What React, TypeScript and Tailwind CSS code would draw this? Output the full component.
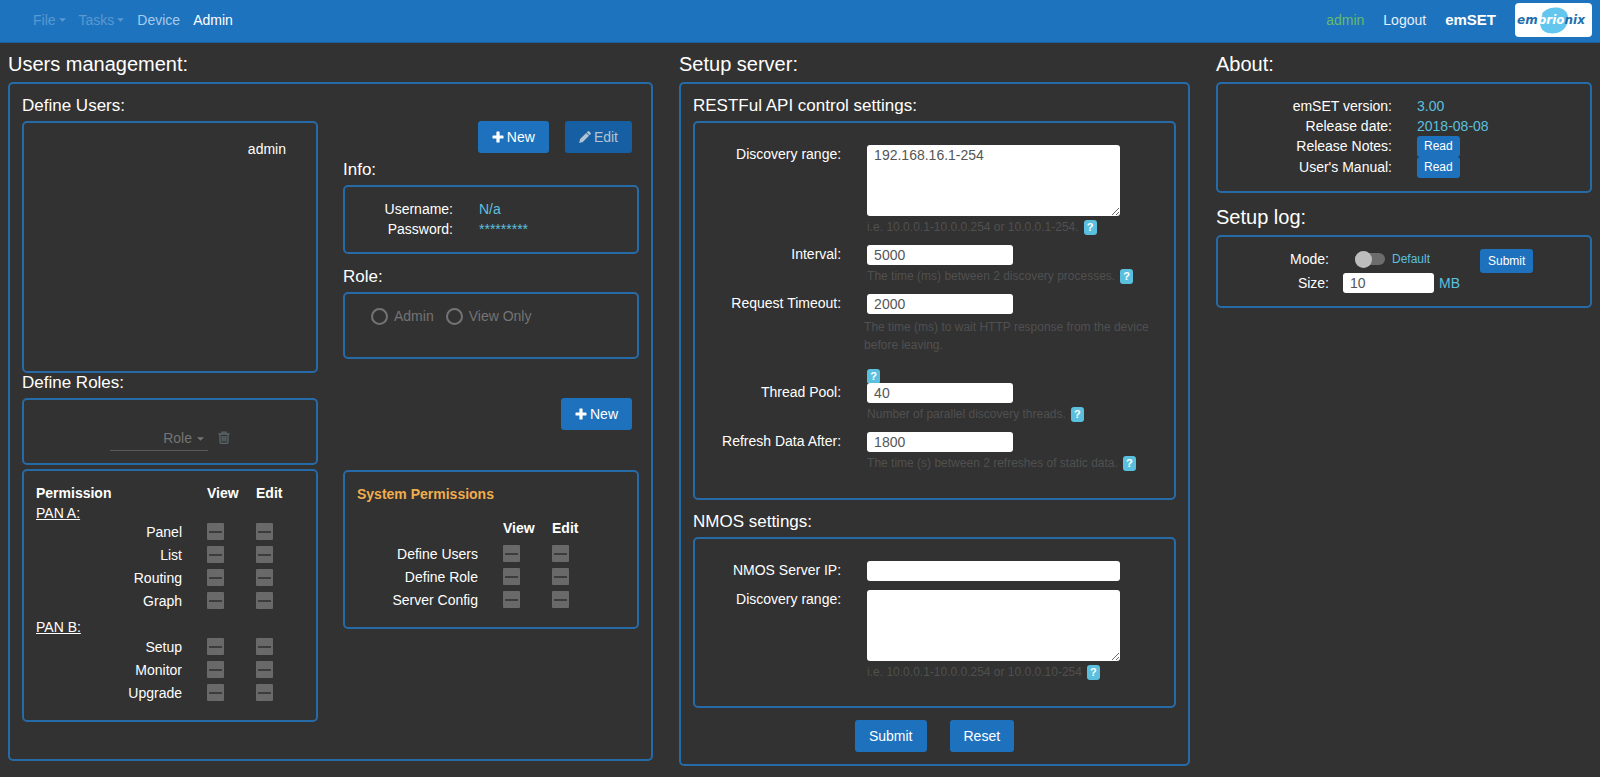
import { useId, type ReactNode } from "react";

function Panel({ className = "", children }: { className?: string; children?: ReactNode }) {
  return <div className={`rounded-[5px] border-2 border-[#266ba8] ${className}`}>{children}</div>;
}

function SectionTitle({ children }: { children: ReactNode }) {
  return <h1 className="mb-[6px] text-[20px] leading-6">{children}</h1>;
}

function PanelTitle({ children }: { children: ReactNode }) {
  return <h2 className="mb-[6px] text-[17px] leading-[19px]">{children}</h2>;
}

function Caret({ className = "" }: { className?: string }) {
  return (
    <svg viewBox="0 0 8 4" className={`h-1 w-[7px] ${className}`} fill="currentColor" aria-hidden="true">
      <path d="M0 0h8L4 4z" />
    </svg>
  );
}

function PlusIcon() {
  return (
    <svg viewBox="0 0 12 12" className="h-3 w-3" fill="currentColor" aria-hidden="true">
      <path d="M5 .5h2a.6.6 0 0 1 .6.6v3.3h3.3a.6.6 0 0 1 .6.6v2a.6.6 0 0 1-.6.6H7.6v3.3a.6.6 0 0 1-.6.6H5a.6.6 0 0 1-.6-.6V7.6H1.1A.6.6 0 0 1 .5 7V5a.6.6 0 0 1 .6-.6h3.3V1.1A.6.6 0 0 1 5 .5z" />
    </svg>
  );
}

function PencilIcon() {
  return (
    <svg viewBox="0 0 12 12" className="h-3 w-3" fill="currentColor" aria-hidden="true">
      <path d="M8.7.5a1.1 1.1 0 0 1 1.6 0l1.2 1.2a1.1 1.1 0 0 1 0 1.6l-1 1L7.700 1.500z" />
      <path d="M7.200 2l2.800 2.800-6.200 6.200L.1 12l1-3.900z" />
    </svg>
  );
}

function TrashIcon() {
  return (
    <svg viewBox="0 0 12 13" className="h-[13px] w-3" fill="none" stroke="currentColor" strokeWidth="1.3" aria-hidden="true">
      <path d="M.5 3h11M4 3V1.200h4V3M2 3v8.300a1 1 0 0 0 1 1h6a1 1 0 0 0 1-1V3M4.200 5v5.500M6 5v5.500M7.800 5v5.500" />
    </svg>
  );
}

function Button({ children, disabled }: { children: ReactNode; disabled?: boolean }) {
  return (
    <button
      type="button"
      disabled={disabled}
      className="flex h-8 items-center gap-[3px] rounded-[3px] bg-[#1e71bd] px-[14px] disabled:bg-[#165fa3] disabled:text-[#b4c3d0]"
    >
      {children}
    </button>
  );
}

function Help({ children }: { children: ReactNode }) {
  return (
    <div className="mb-[7px] flex h-[22px] items-center gap-[5px] text-[12px] text-[#505050]">
      <span>{children}</span>
      <HelpBadge />
    </div>
  );
}

function HelpBadge() {
  return (
    <button
      type="button"
      aria-label="Help"
      className="block h-[15px] w-[13px] rounded-[3px] bg-[#5bc0de] text-center text-[11px] leading-[15px] font-bold text-white"
    >
      ?
    </button>
  );
}

function Field({ label, value, wide, multiline, children }: {
  label: string;
  value: string;
  wide?: boolean;
  multiline?: boolean;
  children?: ReactNode;
}) {
  const id = useId();
  return (
    <div className="grid grid-cols-[30.5%_1fr] gap-x-[26px]">
      <label htmlFor={id} className="text-right leading-[18px]">{label}</label>
      <div>
        {multiline ? (
          <textarea id={id} defaultValue={value} className="block h-[71px] w-full max-w-[253px] rounded-[3px] bg-white px-[7px] leading-5 text-[#555]" />
        ) : (
          <input
            id={id}
            defaultValue={value}
            className={`block h-5 w-full rounded-[3px] bg-white px-[7px] text-[#555] ${wide ? "max-w-[253px]" : "max-w-[146px]"}`}
          />
        )}
        {children}
      </div>
    </div>
  );
}

function Tick({ label }: { label: string }) {
  return (
    <input
      type="checkbox"
      disabled
      aria-label={label}
      className="block h-[17px] w-[17px] appearance-none rounded-[1px] bg-[#696969] bg-[linear-gradient(#3c3c3c,#3c3c3c)] bg-[length:13px_2px] bg-center bg-no-repeat"
    />
  );
}

function PermissionRow({ name }: { name: string }) {
  return (
    <tr className="h-[23px] align-top">
      <th scope="row" className="pr-[25px] text-right leading-[19px] font-normal">{name}</th>
      <td><Tick label={`${name} view`} /></td>
      <td><Tick label={`${name} edit`} /></td>
    </tr>
  );
}

function Radio({ label }: { label: string }) {
  return (
    <label className="flex items-center gap-[6px]">
      <input type="radio" name="role" disabled className="h-[17px] w-[17px] appearance-none rounded-full border-2 border-[#747474]" />
      {label}
    </label>
  );
}

function Logo() {
  return (
    <svg viewBox="0 0 77 34" className="h-[34px] w-[77px] rounded-[4px] bg-white" role="img" aria-label="embrionix">
      <path d="M26 13C28 7 35 4 42 4.500c6 .5 11 4 11 10 0 8-4 14-11.500 15.500-6 1.200-12.500 0-15-4.500-2-4-2-8.500-.5-12.500z" fill="#62c6ee" />
      <text x="2" y="21" fontFamily="DejaVu Sans" fontSize="12" fontWeight="bold" fontStyle="italic" fill="#1f6fab">
        em<tspan fill="#fff">brio</tspan>nix
      </text>
    </svg>
  );
}

function Info({ label, children }: { label: string; children: ReactNode }) {
  return (
    <>
      <dt className="text-right">{label}</dt>
      <dd className="text-[#5bc0de]">{children}</dd>
    </>
  );
}

function ReadLink() {
  return (
    <a href="#read" className="block h-[21px] w-fit rounded-[3px] bg-[#1e71bd] px-[7px] text-[12px] leading-[21px] text-white">
      Read
    </a>
  );
}

function NavBar() {
  return (
    <header className="flex h-[43px] items-center justify-between border-b border-[#1b5f9d] bg-[#1e73be] pr-2 pb-[3px] pl-[33px]">
      <nav className="flex items-center gap-[13px]">
        <button type="button" disabled className="flex items-center gap-[3px] text-[#5a98d0]">
          File <Caret />
        </button>
        <button type="button" disabled className="flex items-center gap-[3px] text-[#5a98d0]">
          Tasks <Caret />
        </button>
        <a href="#device" className="text-[#a6cbec]">Device</a>
        <a href="#admin" className="text-white">Admin</a>
      </nav>
      <div className="flex items-center gap-[19px]">
        <span className="text-[#66bb6a]">admin</span>
        <a href="#logout" className="text-[#e6f0fa]">Logout</a>
        <strong className="text-[15px]">emSET</strong>
        <Logo />
      </div>
    </header>
  );
}

function UsersManagement() {
  return (
    <section>
      <SectionTitle>Users management:</SectionTitle>
      <Panel className="grid grid-cols-2 items-start gap-x-[25px] px-3 pt-3 pb-[37px]">
        <div>
          <PanelTitle>Define Users:</PanelTitle>
          <Panel className="min-h-[252px] px-[30px] py-4">
            <p className="text-right">admin</p>
          </Panel>
          <PanelTitle>Define Roles:</PanelTitle>
          <Panel className="mb-1 flex min-h-[67px] items-start gap-[10px] pt-[26px] pl-[86px]">
            <div className="relative">
              <select
                disabled
                aria-label="Role"
                className="block h-[25px] w-[98px] appearance-none border-b border-[#5a5a5a] bg-transparent pr-4 [text-align-last:right] text-[#747474] opacity-100"
              >
                <option>Role</option>
              </select>
              <Caret className="absolute top-[11px] right-1 text-[#747474]" />
            </div>
            <button type="button" disabled aria-label="Delete role" className="pt-[5px] text-[#5c676b]">
              <TrashIcon />
            </button>
          </Panel>
          <Panel className="px-3 pt-3 pb-[13px]">
            <table className="w-full table-fixed border-collapse text-left">
              <colgroup>
                <col className="w-[171px]" />
                <col className="w-[49px]" />
                <col />
              </colgroup>
              <thead>
                <tr className="h-5">
                  <th>Permission</th>
                  <th>View</th>
                  <th>Edit</th>
                </tr>
              </thead>
              <tbody>
                <tr className="h-5">
                  <th colSpan={3} className="font-normal underline">PAN A:</th>
                </tr>
                <PermissionRow name="Panel" />
                <PermissionRow name="List" />
                <PermissionRow name="Routing" />
                <PermissionRow name="Graph" />
              </tbody>
              <tbody>
                <tr className="h-[23px]">
                  <th colSpan={3} className="font-normal underline">PAN B:</th>
                </tr>
                <PermissionRow name="Setup" />
                <PermissionRow name="Monitor" />
                <PermissionRow name="Upgrade" />
              </tbody>
            </table>
          </Panel>
        </div>
        <div className="pt-[25px]">
          <div className="mb-[7px] flex justify-end gap-4 pr-[7px]">
            <Button><PlusIcon />New</Button>
            <Button disabled><PencilIcon />Edit</Button>
          </div>
          <PanelTitle>Info:</PanelTitle>
          <Panel className="mb-[13px] px-3 pt-3 pb-[13px]">
            <dl className="grid grid-cols-[96px_1fr] gap-x-[26px]">
              <Info label="Username:">N/a</Info>
              <Info label="Password:">*********</Info>
            </dl>
          </Panel>
          <PanelTitle>Role:</PanelTitle>
          <Panel className="mb-[39px] flex min-h-[67px] items-start gap-[12px] px-[26px] pt-3 text-[#747474]">
            <Radio label="Admin" />
            <Radio label="View Only" />
          </Panel>
          <div className="mb-10 flex justify-end pr-[7px]">
            <Button><PlusIcon />New</Button>
          </div>
          <Panel className="px-3 pt-3 pb-[13px]">
            <h3 className="mb-[14px] font-bold text-[#f0ad4e]">System Permissions</h3>
            <table className="w-full table-fixed border-collapse text-left">
              <colgroup>
                <col className="w-[146px]" />
                <col className="w-[49px]" />
                <col />
              </colgroup>
              <thead>
                <tr className="h-[27px] align-top">
                  <td />
                  <th>View</th>
                  <th>Edit</th>
                </tr>
              </thead>
              <tbody>
                <PermissionRow name="Define Users" />
                <PermissionRow name="Define Role" />
                <PermissionRow name="Server Config" />
              </tbody>
            </table>
          </Panel>
        </div>
      </Panel>
    </section>
  );
}

function SetupServer() {
  return (
    <section>
      <SectionTitle>Setup server:</SectionTitle>
      <Panel className="p-3">
        <PanelTitle>RESTFul API control settings:</PanelTitle>
        <Panel className="mb-3 pt-[22px] pb-[17px]">
          <Field label="Discovery range:" value="192.168.16.1-254" multiline>
            <Help>i.e. 10.0.0.1-10.0.0.254 or 10.0.0.1-254.</Help>
          </Field>
          <Field label="Interval:" value="5000">
            <Help>The time (ms) between 2 discovery processes.</Help>
          </Field>
          <Field label="Request Timeout:" value="2000">
            <p className="mt-[4px] mb-[15px] -ml-[3px] max-w-[290px] text-[12px] leading-[18px] text-[#505050]">
              The time (ms) to wait HTTP response from the device before leaving.
            </p>
            <div className="h-[14px] overflow-hidden">
              <HelpBadge />
            </div>
          </Field>
          <Field label="Thread Pool:" value="40">
            <Help>Number of parallel discovery threads.</Help>
          </Field>
          <Field label="Refresh Data After:" value="1800">
            <Help>The time (s) between 2 refreshes of static data.</Help>
          </Field>
        </Panel>
        <PanelTitle>NMOS settings:</PanelTitle>
        <Panel className="mb-3 pt-[22px] pb-4">
          <div className="mb-[9px]">
            <Field label="NMOS Server IP:" value="" wide />
          </div>
          <Field label="Discovery range:" value="" multiline>
            <Help>i.e. 10.0.0.1-10.0.0.254 or 10.0.0.10-254</Help>
          </Field>
        </Panel>
        <div className="flex justify-center gap-[23px]">
          <Button>Submit</Button>
          <Button>Reset</Button>
        </div>
      </Panel>
    </section>
  );
}

function Sidebar() {
  return (
    <section>
      <SectionTitle>About:</SectionTitle>
      <Panel className="mb-3 px-3 pt-3 pb-[13px]">
        <dl className="grid grid-cols-[162px_1fr] grid-rows-[20px_20px_21px_21px] gap-x-[25px]">
          <Info label="emSET version:">3.00</Info>
          <Info label="Release date:">2018-08-08</Info>
          <Info label="Release Notes:"><ReadLink /></Info>
          <Info label="User's Manual:"><ReadLink /></Info>
        </dl>
      </Panel>
      <SectionTitle>Setup log:</SectionTitle>
      <Panel className="flex items-start gap-5 px-3 pt-3 pb-[13px]">
        <div className="grid grid-cols-[99px_auto] gap-x-[14px] gap-y-[4px]">
          <label htmlFor="log-mode" className="text-right">Mode:</label>
          <div className="flex h-5 items-center gap-[7px] pl-3 text-[12px] text-[#5bc0de]">
            <input
              id="log-mode"
              type="checkbox"
              role="switch"
              className="flex h-3 w-[30px] appearance-none items-center rounded-full bg-[#6c6c6c] before:block before:h-[17px] before:w-[17px] before:shrink-0 before:rounded-full before:bg-[#bdbdbd]"
            />
            Default
          </div>
          <label htmlFor="log-size" className="text-right">Size:</label>
          <div className="flex items-center gap-[5px] text-[#5bc0de]">
            <input id="log-size" defaultValue="10" className="block h-5 w-[91px] rounded-[3px] bg-white px-[7px] text-[#555]" />
            MB
          </div>
        </div>
        <button type="button" className="h-6 rounded-[3px] bg-[#1e71bd] px-2 text-[12px] leading-6">
          Submit
        </button>
      </Panel>
    </section>
  );
}

export default function App() {
  return (
    <div className="min-h-screen bg-[#323232] font-['Liberation_Sans',Arial,sans-serif] text-[14px] leading-5 text-white">
      <NavBar />
      <main className="grid grid-cols-[645fr_511fr_376fr] items-start gap-x-[26px] px-2 pt-[9px]">
        <UsersManagement />
        <SetupServer />
        <Sidebar />
      </main>
    </div>
  );
}
